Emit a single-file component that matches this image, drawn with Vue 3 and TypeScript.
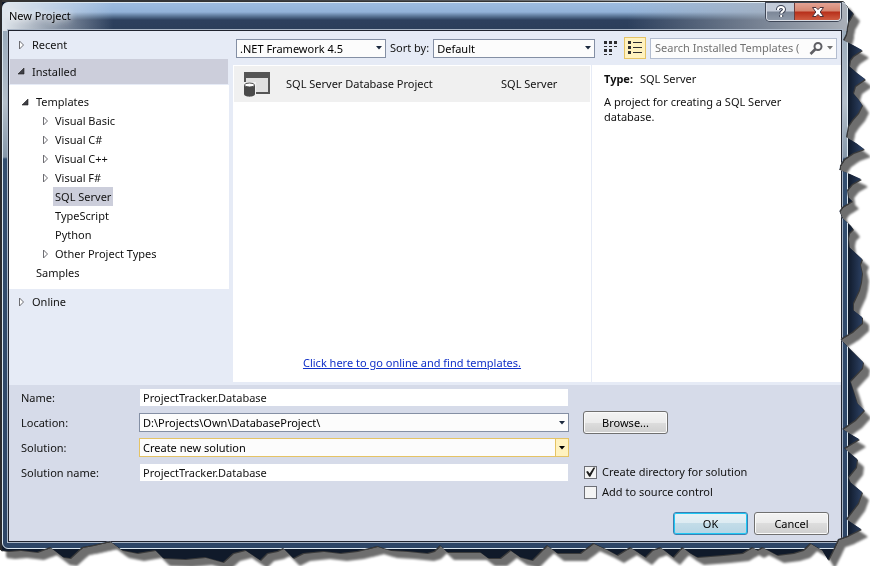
<script setup lang="ts">
import { ref } from 'vue'

interface TreeItem {
  label: string
  level: number
  state: 'open' | 'closed' | 'leaf'
  selected?: boolean
}

const tree: TreeItem[] = [
  { label: 'Templates', level: 0, state: 'open' },
  { label: 'Visual Basic', level: 1, state: 'closed' },
  { label: 'Visual C#', level: 1, state: 'closed' },
  { label: 'Visual C++', level: 1, state: 'closed' },
  { label: 'Visual F#', level: 1, state: 'closed' },
  { label: 'SQL Server', level: 1, state: 'leaf', selected: true },
  { label: 'TypeScript', level: 1, state: 'leaf' },
  { label: 'Python', level: 1, state: 'leaf' },
  { label: 'Other Project Types', level: 1, state: 'closed' },
  { label: 'Samples', level: 0, state: 'leaf' },
]

const projectName = ref('ProjectTracker.Database')
const solutionName = ref('ProjectTracker.Database')
const createDirectory = ref(true)
const sourceControl = ref(false)

// Torn paper edge: [distance from the right side, y], from top to bottom
const tornRight: number[][] = [
  [27, 1], [22, 8], [17, 13], [19, 17], [22, 22], [23, 27], [24, 34], [27, 40],
  [17, 45], [8, 50], [17, 56], [20, 60], [21, 66], [13, 73], [5, 79], [15, 86], [17, 93],
  [12, 99], [8, 105], [12, 113], [18, 120], [22, 126], [24, 137], [14, 143], [6, 149],
  [17, 153], [26, 159], [30, 165], [31, 170], [20, 174], [9, 179], [18, 184], [23, 190],
  [22, 197], [18, 201], [28, 207], [31, 211], [28, 218], [20, 225], [17, 229], [21, 233],
  [22, 238], [21, 247], [8, 259], [10, 264], [8, 273], [9, 282], [11, 290], [17, 303],
  [17, 310], [8, 317], [8, 323], [18, 332], [30, 339], [22, 347], [7, 362], [8, 368],
  [20, 381], [17, 390], [13, 403], [6, 410], [15, 420], [28, 429], [11, 439], [26, 448],
  [13, 459], [14, 467], [22, 477], [20, 482], [8, 492], [12, 503], [24, 519], [9, 529],
  [23, 536], [32, 539], [37, 550], [42, 560],
]
// [x, distance from the bottom], from right to left
const tornBottom: number[][] = [
  [822, 16], [810, 23], [803, 16], [793, 13], [777, 11], [762, 19], [757, 16], [752, 19],
  [742, 13], [723, 11], [697, 9], [690, 13], [682, 19], [673, 9], [660, 19], [652, 16],
  [645, 9], [630, 19], [617, 11], [606, 17], [593, 23], [580, 13], [567, 13], [557, 13],
  [547, 21], [541, 15], [532, 6], [520, 9], [510, 16], [500, 8], [488, 8], [480, 14],
  [460, 14], [447, 14], [440, 21], [434, 15], [427, 13], [407, 15], [390, 16], [377, 20],
  [357, 15], [340, 13], [323, 15], [303, 13], [293, 8], [283, 18], [277, 15], [267, 13],
  [260, 6], [245, 16], [233, 13], [223, 4], [205, 9], [185, 7], [163, 8], [155, 16],
  [137, 13], [122, 16], [110, 25], [93, 21], [82, 19], [70, 8], [63, 9], [50, 19],
  [37, 14], [20, 16], [8, 15], [0, 16],
]
const tornShape =
  'polygon(0 0, ' +
  tornRight.map(([r, y]) => `calc(100% - ${r}px) ${y}px`).join(', ') +
  ', ' +
  tornBottom.map(([x, b]) => `${((x / 870) * 100).toFixed(2)}% calc(100% - ${b}px)`).join(', ') +
  ')'
</script>

<template>
  <div class="sheet">
    <div class="desktop" :style="{ clipPath: tornShape }">
      <section class="window" aria-labelledby="window-title">
        <header class="titlebar">
          <h1 id="window-title">New Project</h1>
          <div class="caption-buttons">
            <button type="button" class="help" aria-label="Help">
              <svg width="12" height="14" viewBox="0 0 12 14" fill="none">
                <path d="M3 5V4.500a3 2.500 0 0 1 6 0c0 2-2.800 2-2.800 4M6.200 10v2" stroke="#3c4254" stroke-width="4" />
                <path d="M3 5V4.500a3 2.500 0 0 1 6 0c0 2-2.800 2-2.800 4M6.200 10v2" stroke="#fff" stroke-width="2" />
              </svg>
            </button>
            <button type="button" class="close" aria-label="Close">
              <svg width="14" height="12" viewBox="0 0 14 12">
                <path d="M1.500 1.500h3.500L7 3.600 9 1.500h3.500L9.200 6l3.300 4.500H9L7 8.400 5 10.500H1.500L4.800 6z" fill="#fff" stroke="#4b3038" />
              </svg>
            </button>
          </div>
        </header>

        <form class="client" @submit.prevent>
          <div class="browser">
            <nav class="sidebar" aria-label="Template sources">
              <button type="button" class="group recent">
                <svg class="twisty" width="8" height="10" viewBox="0 0 8 10"><path d="M1.500 1v8L5.500 5z" fill="#fff" stroke="#6d6d72" /></svg>
                <span>Recent</span>
              </button>
              <button type="button" class="group installed">
                <svg class="twisty" width="8" height="8" viewBox="0 0 8 8"><path d="M6 0v6H0z" fill="#3f3f46" stroke="#1e1e1e" stroke-width=".6" /></svg>
                <span>Installed</span>
              </button>
              <ul class="tree">
                <li v-for="item in tree" :key="item.label" :class="{ child: item.level === 1 }">
                  <span class="slot">
                    <svg v-if="item.state === 'open'" width="8" height="8" viewBox="0 0 8 8"><path d="M7 1v6H1z" fill="#3f3f46" stroke="#1e1e1e" stroke-width=".6" /></svg>
                    <svg v-else-if="item.state === 'closed'" width="8" height="10" viewBox="0 0 8 10"><path d="M3.500 1v8L7.500 5z" fill="#fff" stroke="#6d6d72" /></svg>
                  </span>
                  <span class="node" :class="{ selected: item.selected }">{{ item.label }}</span>
                </li>
              </ul>
              <button type="button" class="group online">
                <svg class="twisty" width="8" height="10" viewBox="0 0 8 10"><path d="M1.500 1v8L5.500 5z" fill="#fff" stroke="#6d6d72" /></svg>
                <span>Online</span>
              </button>
            </nav>

            <div class="content">
              <div class="toolbar">
                <div class="combo framework">
                  <select aria-label="Target framework"><option>.NET Framework 4.5</option></select>
                  <svg width="6" height="4" viewBox="0 0 6 4"><path d="M0 0h6L3 3.500z" fill="#1b293e" /></svg>
                </div>
                <label for="sort">Sort by:</label>
                <div class="combo sort">
                  <select id="sort"><option>Default</option></select>
                  <svg width="6" height="4" viewBox="0 0 6 4"><path d="M0 0h6L3 3.500z" fill="#1b293e" /></svg>
                </div>
                <div class="views">
                  <button type="button" class="view" aria-label="Small icons">
                    <svg width="14" height="14" viewBox="0 0 14 14" fill="#2d2d30">
                      <path d="M0 0h3v3H0zM5 0h3v3H5zM10 0h3v3h-3zM0 5h3v1H0zM5 5h3v1H5zM10 5h3v1h-3zM0 8h3v3H0zM5 8h3v3H5zM0 13h3v1H0zM5 13h3v1H5z" />
                    </svg>
                  </button>
                  <button type="button" class="view active" aria-label="Medium icons">
                    <svg width="14" height="14" viewBox="0 0 14 14" fill="#2d2d30">
                      <path d="M0 0h3v3H0zM0 5h3v3H0zM0 10h3v3H0zM5 1h9v1H5zM5 6h9v1H5zM5 11h9v1H5z" />
                    </svg>
                  </button>
                </div>
                <div class="search">
                  <input type="text" aria-label="Search Installed Templates" placeholder="Search Installed Templates (Ctrl+E)" />
                  <button type="button" aria-label="Search">
                    <svg width="14" height="13" viewBox="0 0 14 13" fill="none" stroke="#5f5f64">
                      <circle cx="9" cy="4.500" r="3.500" stroke-width="2" /><path d="M6.500 7 1.500 12" stroke-width="2.600" />
                    </svg>
                    <svg width="6" height="4" viewBox="0 0 6 4"><path d="M0 0h6L3 3.500z" fill="#717171" /></svg>
                  </button>
                </div>
              </div>

              <div class="panes">
                <div class="templates">
                  <div class="template">
                    <svg width="28" height="28" viewBox="0 0 28 28">
                      <path d="M2 2h26v22H2z" fill="#555" />
                      <path d="M4 8h22v14H4z" fill="#e0e0e0" />
                      <path d="M0 12h14v14H0z" fill="#f0f0f0" />
                      <path d="M2 15v9c0 3.500 11 3.500 11 0v-9" fill="#4a4a4a" />
                      <ellipse cx="7.500" cy="15" rx="5" ry="2" fill="#fff" stroke="#4a4a4a" />
                    </svg>
                    <span class="template-name">SQL Server Database Project</span>
                    <span>SQL Server</span>
                  </div>
                  <a href="#online" class="more">Click here to go online and find templates.</a>
                </div>
                <aside class="details">
                  <p><strong>Type:</strong> SQL Server</p>
                  <p class="description">A project for creating a SQL Server database.</p>
                </aside>
              </div>
            </div>
          </div>

          <div class="fields">
            <label for="name">Name:</label>
            <input id="name" v-model="projectName" class="text" type="text" />

            <label for="location">Location:</label>
            <div class="combo">
              <select id="location"><option>D:\Projects\Own\DatabaseProject\</option></select>
              <svg width="6" height="4" viewBox="0 0 6 4"><path d="M0 0h6L3 3.500z" fill="#1b293e" /></svg>
            </div>
            <button type="button" class="push browse">Browse...</button>

            <label for="solution">Solution:</label>
            <div class="combo hot">
              <select id="solution"><option>Create new solution</option></select>
              <svg width="6" height="4" viewBox="0 0 6 4"><path d="M0 0h6L3 3.500z" fill="#000" /></svg>
            </div>

            <label for="solution-name">Solution name:</label>
            <input id="solution-name" v-model="solutionName" class="text" type="text" />

            <div class="checks">
              <label><input v-model="createDirectory" type="checkbox" /><span>Create directory for solution</span></label>
              <label><input v-model="sourceControl" type="checkbox" /><span>Add to source control</span></label>
            </div>
          </div>

          <footer class="actions">
            <button type="submit" class="push default">OK</button>
            <button type="button" class="push">Cancel</button>
          </footer>
        </form>
      </section>
    </div>
  </div>
</template>

<style>
body {
  background: #fff;
}
</style>

<style scoped>
* {
  box-sizing: border-box;
}
.sheet {
  font: 11px/16px 'Segoe UI', 'Noto Sans', 'Open Sans', sans-serif;
  color: #111;
  overflow: hidden;
  filter: drop-shadow(1px 1px 0 #3a3a3a) drop-shadow(6px 7px 1px #6e6e6e);
}
.desktop {
  display: flex;
  min-height: 100vh;
  padding: 2px 22px 17px 2px;
  background: linear-gradient(90deg, #2a2a2c 2px, transparent 2px),
    linear-gradient(#333 2px, transparent 2px),
    linear-gradient(90deg, #101a2a calc(100% - 22px), #2b3f61 calc(100% - 8px));
}
button,
input,
select {
  margin: 0;
  padding: 0;
  border: 0;
  border-radius: 0;
  background: none;
  font: inherit;
  color: inherit;
}
h1,
p,
ul {
  margin: 0;
  padding: 0;
}
.window {
  flex: 1;
  display: flex;
  flex-direction: column;
  padding: 0 5px 6px;
  border: 1px solid #dbe7f0;
  border-radius: 6px;
  background: linear-gradient(90deg, #e0e6ec 0, #b5c2d200 110px) 0 0 / 100% 28px no-repeat,
    linear-gradient(270deg, #a9afb8 0, #8b929e00 220px) 0 0 / 100% 28px no-repeat,
    linear-gradient(#9dbce0 0, #92b2d8 9px, #5c7899 13px, #2d405e 17px, #2b3e5a 28px, transparent 28px),
    linear-gradient(#9aabbb 28px, #b4bfca 100px, #8698aa 154px, #344f70 156px, #2d4566 100%);
}
.titlebar {
  display: flex;
  justify-content: space-between;
  height: 27px;
  padding: 0 1px;
}
h1 {
  padding-top: 5px;
  font-size: 11px;
  font-weight: 400;
  line-height: 16px;
  color: #000;
  text-shadow: 0 0 6px #fff, 0 0 8px #fff;
}
.caption-buttons {
  display: flex;
  height: 18px;
  border: 1px solid #d8dde6;
  border-top: 0;
  border-radius: 0 0 4px 4px;
  box-shadow: 0 0 0 1px #3f4757;
  overflow: hidden;
}
.caption-buttons button {
  display: grid;
  place-items: center;
}
.help {
  width: 27px;
  background: linear-gradient(#c3cbd8 8px, #7c8798 9px, #8e99a8);
}
.caption-buttons .close {
  width: 46px;
  border-left: 1px solid #6c3c3c;
  background: linear-gradient(#e4a394 0, #d58670 8px, #b72f1a 9px, #cf5c41);
}
.client {
  flex: 1;
  display: flex;
  flex-direction: column;
  border: 1px solid #20242f;
  outline: 1px solid #aab6c6;
  background: #d6dbe9;
}
.browser {
  flex: 1;
  display: flex;
  padding-bottom: 3px;
  background: #e6ebf6;
}
.sidebar {
  display: flex;
  flex-direction: column;
  width: 220px;
}
.group {
  display: flex;
  align-items: center;
  gap: 6px;
  height: 25px;
  padding-left: 9px;
  text-align: left;
}
.twisty {
  width: 8px;
}
.recent {
  height: 28px;
}
.installed {
  margin: 0 1px;
  padding-left: 8px;
  background: #cccedb;
}
.tree {
  margin-top: 1px;
  padding: 7px 0;
  background: #fff;
  list-style: none;
}
.tree li {
  display: flex;
  height: 19px;
  padding-left: 12px;
}
.tree .child {
  padding-left: 31px;
}
.slot {
  display: flex;
  align-items: center;
  width: 13px;
}
.node {
  padding: 0 2px;
  line-height: 19px;
}
.selected {
  background: #cccedb;
}
.content {
  flex: 1;
  display: flex;
  flex-direction: column;
  margin-left: 4px;
}
.toolbar {
  display: flex;
  align-items: center;
  height: 34px;
  padding: 0 4px 0 3px;
}
.combo {
  display: grid;
  align-items: center;
  height: 19px;
  border: 1px solid #848fa4;
  background: #fcfcfc;
  color: #000;
}
.combo select {
  grid-area: 1 / 1;
  width: 100%;
  height: 17px;
  padding-left: 3px;
  line-height: 17px;
  appearance: none;
}
.combo svg {
  grid-area: 1 / 1;
  justify-self: end;
  margin-right: 3px;
  pointer-events: none;
}
.framework {
  width: 150px;
  margin-right: 4px;
}
.sort {
  flex: 1;
  margin-left: 4px;
}
.views {
  display: flex;
  gap: 2px;
  margin: 0 4px 0 5px;
}
.view {
  display: grid;
  place-items: center;
  width: 22px;
  height: 22px;
}
.active {
  border: 1px solid #e5c365;
  background: #fff2bf;
}
.search {
  display: flex;
  width: 187px;
  height: 21px;
  border: 1px solid #b3bdd0;
  background: #fcfcfc;
}
.search input {
  flex: 1;
  min-width: 0;
  padding-left: 4px;
}
.search input::placeholder {
  color: #717171;
}
.search button {
  display: flex;
  align-items: center;
  gap: 4px;
  padding: 0 3px 0 9px;
}
.panes {
  flex: 1;
  display: flex;
  background: #fff;
}
.templates {
  flex: 1;
  display: flex;
  flex-direction: column;
  justify-content: space-between;
  padding: 1px 1px 11px;
  border-right: 1px solid #e6ebf6;
}
.template {
  display: flex;
  align-items: center;
  height: 36px;
  padding-left: 8px;
  background: #f0f0f0;
}
.template-name {
  width: 215px;
  margin-left: 16px;
}
.more {
  align-self: center;
  color: #1030c8;
}
.details {
  width: 249px;
  padding: 6px 12px;
}
.details strong {
  margin-right: 4px;
}
.details .description {
  margin-top: 7px;
  max-width: 210px;
  line-height: 15px;
}
.fields {
  display: grid;
  grid-template-columns: 118px 1fr 258px;
  grid-template-rows: repeat(5, 25px);
  align-items: center;
  padding-left: 12px;
}
.fields > label {
  grid-column: 1;
}
.fields > .text,
.fields > .combo {
  grid-column: 2;
  margin-right: 14px;
}
.text {
  height: 17px;
  margin-left: 1px;
  padding-left: 3px;
  background: #fff;
}
.fields > .text {
  margin-right: 15px;
}
.hot {
  border-color: #e5c365;
  background: linear-gradient(#e5c365, #e5c365) right 12px top 0 / 1px 100% no-repeat,
    linear-gradient(#fff2bf, #fff2bf) right / 12px 100% no-repeat, #fcfcfc;
}
.push {
  height: 23px;
  width: 75px;
  border: 1px solid #707070;
  border-radius: 3px;
  background: linear-gradient(#f3f3f3 0, #ebebeb 50%, #dddddd 50%, #cfcfcf);
  box-shadow: inset 0 0 0 1px #fafafa;
  color: #000;
}
.browse {
  grid-area: 2 / 3;
  width: 85px;
}
.default {
  border-color: #3c7fb1;
  background: linear-gradient(#e9f1f5 0, #dcebf2 50%, #c3dce8 50%, #b5d5e5);
  box-shadow: inset 0 0 0 1px #1fc8f4;
}
.checks {
  grid-area: 4 / 3 / span 2;
  align-self: start;
  padding: 2px 0 0 1px;
}
.checks label {
  display: flex;
  align-items: center;
  gap: 5px;
  height: 20px;
}
.checks input {
  display: grid;
  width: 13px;
  height: 13px;
  border: 1px solid #6d6f76;
  background: #f4f4f4;
  appearance: none;
}
.checks input:checked::before {
  content: '';
  background: #1e1e1e;
  clip-path: polygon(10% 48%, 26% 40%, 42% 64%, 78% 8%, 94% 8%, 48% 94%, 38% 94%);
}
.actions {
  display: flex;
  justify-content: flex-end;
  gap: 6px;
  padding: 2px 12px 6px;
}
</style>
